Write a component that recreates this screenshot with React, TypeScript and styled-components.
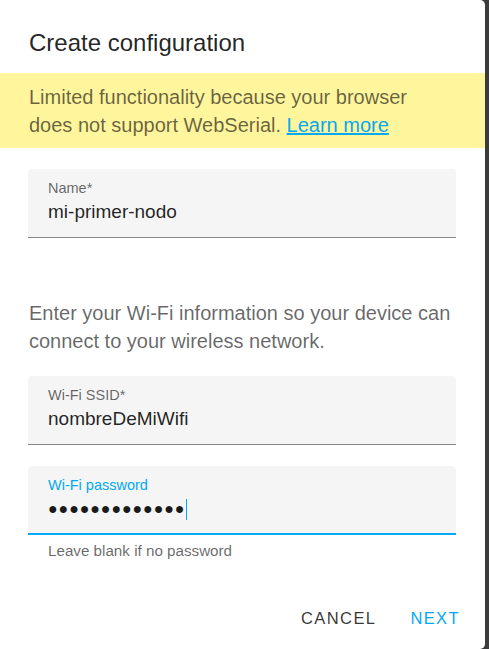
import React from 'react';
import styled, { createGlobalStyle } from 'styled-components';

const GlobalStyle = createGlobalStyle`
  html, body {
    margin: 0;
    padding: 0;
    background: #3b3b3b;
    font-family: "Liberation Sans", Arial, sans-serif;
  }
`;

const BLUE = '#03a9f4';

const Dialog = styled.div`
  width: 485px;
  height: 649px;
  background: #fff;
  border-radius: 0 5px 5px 0;
  display: flex;
  flex-direction: column;
  box-sizing: border-box;
`;

const Title = styled.h2`
  margin: 0;
  padding: 31px 29px 0;
  font-size: 24px;
  font-weight: 400;
  line-height: 24px;
  color: rgba(0, 0, 0, 0.87);
`;

const Banner = styled.div`
  margin-top: 18px;
  padding: 10px 50px 9px 29px;
  background: #fff59d;
  font-size: 20px;
  line-height: 28px;
  color: rgba(0, 0, 0, 0.6);
`;

const Link = styled.a`
  color: ${BLUE};
  text-decoration: underline;
`;

const Content = styled.div`
  padding: 0 29px 0 28px;
`;

const Field = styled.div<{ $focused?: boolean; $gap: number }>`
  margin-top: ${p => p.$gap}px;
  height: 69px;
  box-sizing: border-box;
  padding: 11px 20px 0;
  background: #f5f5f5;
  border-radius: 4px 4px 0 0;
  border-bottom: ${p => (p.$focused ? `2px solid ${BLUE}` : '1px solid rgba(0, 0, 0, 0.45)')};
`;

const Label = styled.div<{ $focused?: boolean }>`
  font-size: 14.5px;
  line-height: 16px;
  color: ${p => (p.$focused ? BLUE : 'rgba(0, 0, 0, 0.6)')};
`;

const Value = styled.div`
  margin-top: 4px;
  font-size: 19px;
  line-height: 24px;
  color: rgba(0, 0, 0, 0.87);
  display: flex;
  align-items: center;
`;

const Dots = styled.span`
  font-size: 16px;
  letter-spacing: 0.9px;
  color: #1a1a1a;
`;

const Caret = styled.span`
  display: inline-block;
  width: 1px;
  height: 21px;
  background: ${BLUE};
  margin-left: 1px;
`;

const Info = styled.p`
  margin: 61px 0 0 1px;
  font-size: 20px;
  line-height: 28px;
  color: rgba(0, 0, 0, 0.6);
`;

const Helper = styled.div`
  margin-top: 8px;
  padding-left: 20px;
  font-size: 15.2px;
  line-height: 16px;
  color: rgba(0, 0, 0, 0.6);
`;

const Actions = styled.div`
  margin-top: 41px;
  display: flex;
  justify-content: flex-end;
  gap: 18px;
  padding-right: 17px;
`;

const Button = styled.button<{ $primary?: boolean }>`
  border: 0;
  background: none;
  height: 36px;
  padding: 0 8px;
  font-family: inherit;
  font-size: 16.5px;
  letter-spacing: 1.4px;
  text-transform: uppercase;
  color: ${p => (p.$primary ? BLUE : 'rgba(0, 0, 0, 0.8)')};
  cursor: pointer;
`;

export default function App() {
  return (
    <>
      <GlobalStyle />
      <Dialog>
        <Title>Create configuration</Title>
        <Banner>
          Limited functionality because your browser does not support WebSerial.{' '}
          <Link href="#">Learn more</Link>
        </Banner>
        <Content>
          <Field $gap={21}>
            <Label>Name*</Label>
            <Value>mi-primer-nodo</Value>
          </Field>
          <Info>
            Enter your Wi-Fi information so your device can connect to your wireless network.
          </Info>
          <Field $gap={21}>
            <Label>Wi-Fi SSID*</Label>
            <Value>nombreDeMiWifi</Value>
          </Field>
          <Field $gap={21} $focused>
            <Label $focused>Wi-Fi password</Label>
            <Value>
              <Dots>●●●●●●●●●●●●●</Dots>
              <Caret />
            </Value>
          </Field>
          <Helper>Leave blank if no password</Helper>
        </Content>
        <Actions>
          <Button>Cancel</Button>
          <Button $primary>Next</Button>
        </Actions>
      </Dialog>
    </>
  );
}
